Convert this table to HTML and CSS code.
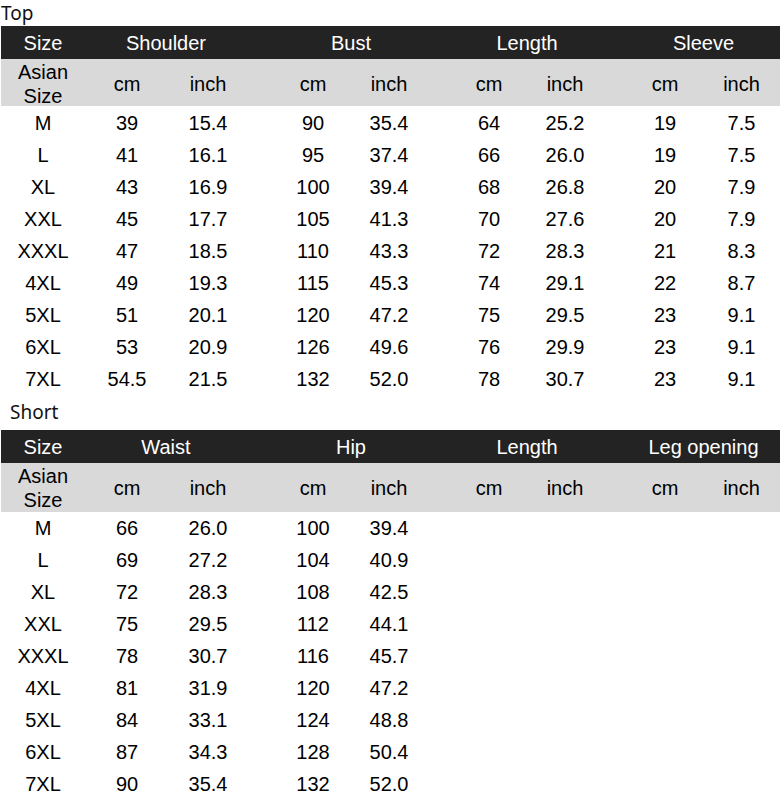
FILE: index.html
```html
<!DOCTYPE html>
<html lang="en">
<head>
<meta charset="utf-8">
<title>Size Chart</title>
<link rel="stylesheet" href="styles.css">
</head>
<body>
<div class="page">
  <div class="label">Top</div>
  <div class="chart">
    <div class="row head">
      <div>Size</div><div class="h1">Shoulder</div><div class="h2">Bust</div><div class="h3">Length</div><div class="h4">Sleeve</div>
    </div>
    <div class="row units">
      <div class="asian">Asian Size</div><div>cm</div><div>inch</div><div class="g2">cm</div><div>inch</div><div class="g3">cm</div><div>inch</div><div class="g4">cm</div><div>inch</div>
    </div>
    <div class="data data-top">
      <div class="row d"><div>M</div><div>39</div><div>15.4</div><div class="g2">90</div><div>35.4</div><div class="g3">64</div><div>25.2</div><div class="g4">19</div><div>7.5</div></div>
      <div class="row d"><div>L</div><div>41</div><div>16.1</div><div class="g2">95</div><div>37.4</div><div class="g3">66</div><div>26.0</div><div class="g4">19</div><div>7.5</div></div>
      <div class="row d"><div>XL</div><div>43</div><div>16.9</div><div class="g2">100</div><div>39.4</div><div class="g3">68</div><div>26.8</div><div class="g4">20</div><div>7.9</div></div>
      <div class="row d"><div>XXL</div><div>45</div><div>17.7</div><div class="g2">105</div><div>41.3</div><div class="g3">70</div><div>27.6</div><div class="g4">20</div><div>7.9</div></div>
      <div class="row d"><div>XXXL</div><div>47</div><div>18.5</div><div class="g2">110</div><div>43.3</div><div class="g3">72</div><div>28.3</div><div class="g4">21</div><div>8.3</div></div>
      <div class="row d"><div>4XL</div><div>49</div><div>19.3</div><div class="g2">115</div><div>45.3</div><div class="g3">74</div><div>29.1</div><div class="g4">22</div><div>8.7</div></div>
      <div class="row d"><div>5XL</div><div>51</div><div>20.1</div><div class="g2">120</div><div>47.2</div><div class="g3">75</div><div>29.5</div><div class="g4">23</div><div>9.1</div></div>
      <div class="row d"><div>6XL</div><div>53</div><div>20.9</div><div class="g2">126</div><div>49.6</div><div class="g3">76</div><div>29.9</div><div class="g4">23</div><div>9.1</div></div>
      <div class="row d"><div>7XL</div><div>54.5</div><div>21.5</div><div class="g2">132</div><div>52.0</div><div class="g3">78</div><div>30.7</div><div class="g4">23</div><div>9.1</div></div>
    </div>
  </div>

  <div class="label label-short">Short</div>
  <div class="chart">
    <div class="row head">
      <div>Size</div><div class="h1">Waist</div><div class="h2">Hip</div><div class="h3">Length</div><div class="h4">Leg opening</div>
    </div>
    <div class="row units units-short">
      <div class="asian">Asian Size</div><div>cm</div><div>inch</div><div class="g2">cm</div><div>inch</div><div class="g3">cm</div><div>inch</div><div class="g4">cm</div><div>inch</div>
    </div>
    <div class="data">
      <div class="row d"><div>M</div><div>66</div><div>26.0</div><div class="g2">100</div><div>39.4</div></div>
      <div class="row d"><div>L</div><div>69</div><div>27.2</div><div class="g2">104</div><div>40.9</div></div>
      <div class="row d"><div>XL</div><div>72</div><div>28.3</div><div class="g2">108</div><div>42.5</div></div>
      <div class="row d"><div>XXL</div><div>75</div><div>29.5</div><div class="g2">112</div><div>44.1</div></div>
      <div class="row d"><div>XXXL</div><div>78</div><div>30.7</div><div class="g2">116</div><div>45.7</div></div>
      <div class="row d"><div>4XL</div><div>81</div><div>31.9</div><div class="g2">120</div><div>47.2</div></div>
      <div class="row d"><div>5XL</div><div>84</div><div>33.1</div><div class="g2">124</div><div>48.8</div></div>
      <div class="row d"><div>6XL</div><div>87</div><div>34.3</div><div class="g2">128</div><div>50.4</div></div>
      <div class="row d"><div>7XL</div><div>90</div><div>35.4</div><div class="g2">132</div><div>52.0</div></div>
    </div>
  </div>
</div>
</body>
</html>
```

FILE: styles.css
```css
html, body {
  margin: 0;
  padding: 0;
  background: #ffffff;
}

body {
  font-family: "Liberation Sans", Arial, sans-serif;
  color: #000000;
}

.page {
  width: 782px;
}

.label {
  font-family: "Noto Sans", "Open Sans", sans-serif;
  font-size: 19px;
  height: 26px;
  line-height: 26px;
  padding-left: 1px;
  color: #111111;
}

.label-short {
  height: 35px;
  line-height: 35px;
  padding-left: 10px;
}

.chart {
  margin-left: 1px;
  width: 779px;
  font-size: 20px;
}

.row {
  display: grid;
  grid-template-columns: 84px 84px 78px 28px 76px 76px 24px 76px 76px 24px 76px 77px;
  text-align: center;
  white-space: nowrap;
}

.head {
  background: #232323;
  color: #ffffff;
  height: 33px;
  box-sizing: border-box;
  padding-top: 1px;
  line-height: 32px;
}

.h1 { grid-column: 2 / 4; }
.h2 { grid-column: 5 / 7; }
.h3 { grid-column: 8 / 10; }
.h4 { grid-column: 11 / 13; }

.g2 { grid-column: 5; }
.g3 { grid-column: 8; }
.g4 { grid-column: 11; }

.units {
  background: #d9d9d9;
  height: 47px;
  align-items: center;
  line-height: 24px;
}

.units-short {
  height: 49px;
}

.asian {
  align-self: start;
  padding-top: 1px;
  white-space: normal;
  padding-left: 12px;
  padding-right: 12px;
}

.data-top {
  padding-top: 1px;
}

.d {
  height: 32px;
  line-height: 32px;
}
```
